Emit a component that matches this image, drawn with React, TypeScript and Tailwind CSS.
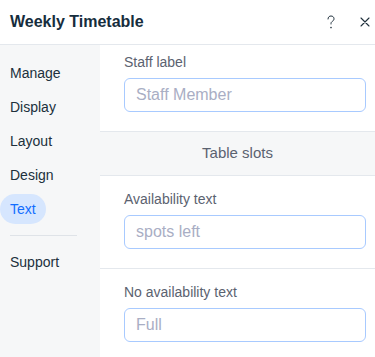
import React from "react";

const navItems = ["Manage", "Display", "Layout", "Design", "Text"];

function Field({ label, placeholder }: { label: string; placeholder: string }) {
  return (
    <div className="flex flex-col">
      <label className="h-[18px] text-[14px] leading-[18px] text-[#5b6270]">{label}</label>
      <input
        readOnly
        placeholder={placeholder}
        className="mt-[7px] h-[34px] w-full rounded-[6px] border border-[#a8caff] bg-white px-[11px] text-[16px] text-[#20303c] outline-none placeholder:text-[#a9aec4]"
      />
    </div>
  );
}

export default function App() {
  return (
    <div className="flex h-[357px] w-[375px] flex-col overflow-hidden bg-white font-['Liberation_Sans',Arial,sans-serif] text-[#20303c]">
      <header className="flex h-[45px] shrink-0 items-center border-b border-[#e4e8ed] pl-[10px] pr-[5px]">
        <h1 className="flex-1 text-[16px] font-bold text-[#162d3d]">Weekly Timetable</h1>
        {/* help icon */}
        <svg width="8" height="15" viewBox="0 0 8 15" className="mr-[25px]">
          <path
            d="M1 4 C1 2 2.4 1 4 1 C5.8 1 7 2.2 7 3.8 C7 5.4 5.8 6 4.8 6.8 C4.2 7.3 4 7.8 4 9"
            fill="none"
            stroke="#20303c"
            strokeWidth="1"
            strokeLinecap="round"
          />
          <circle cx="4" cy="12.6" r="0.8" fill="#20303c" />
        </svg>
        <svg width="10" height="10" viewBox="0 0 10 10">
          <path d="M1 1 L9 9 M9 1 L1 9" stroke="#20303c" strokeWidth="1.1" strokeLinecap="round" />
        </svg>
      </header>

      <div className="flex flex-1">
        <nav className="flex w-[100px] shrink-0 flex-col bg-[#f6f7f8] pt-[13px]">
          {navItems.map((item) => (
            <div key={item} className="mb-[4px] flex h-[30px] items-center">
              <span
                className={
                  item === "Text"
                    ? "flex h-[30px] items-center rounded-full bg-[#d6e6fe] px-[10px] text-[14px] text-[#116dff]"
                    : "px-[10px] text-[14px] text-[#20303c]"
                }
              >
                {item}
              </span>
            </div>
          ))}
          <div className="mx-[10px] mt-[7px] h-px w-[67px] bg-[#dfe3e8]" />
          <div className="mt-[11px] flex h-[30px] items-center px-[10px] text-[14px]">Support</div>
        </nav>

        <main className="flex flex-1 flex-col">
          <section className="border-b border-[#e4e8ed] pb-[19px] pl-[24px] pr-[9px] pt-[8px]">
            <Field label="Staff label" placeholder="Staff Member" />
          </section>
          <div className="flex h-[44px] items-center justify-center border-b border-[#e4e8ed] bg-[#f6f7f8] text-[15px] text-[#5b6270]">
            Table slots
          </div>
          <section className="border-b border-[#e4e8ed] pb-[19px] pl-[24px] pr-[9px] pt-[14px]">
            <Field label="Availability text" placeholder="spots left" />
          </section>
          <section className="pl-[24px] pr-[9px] pt-[14px]">
            <Field label="No availability text" placeholder="Full" />
          </section>
        </main>
      </div>
    </div>
  );
}
